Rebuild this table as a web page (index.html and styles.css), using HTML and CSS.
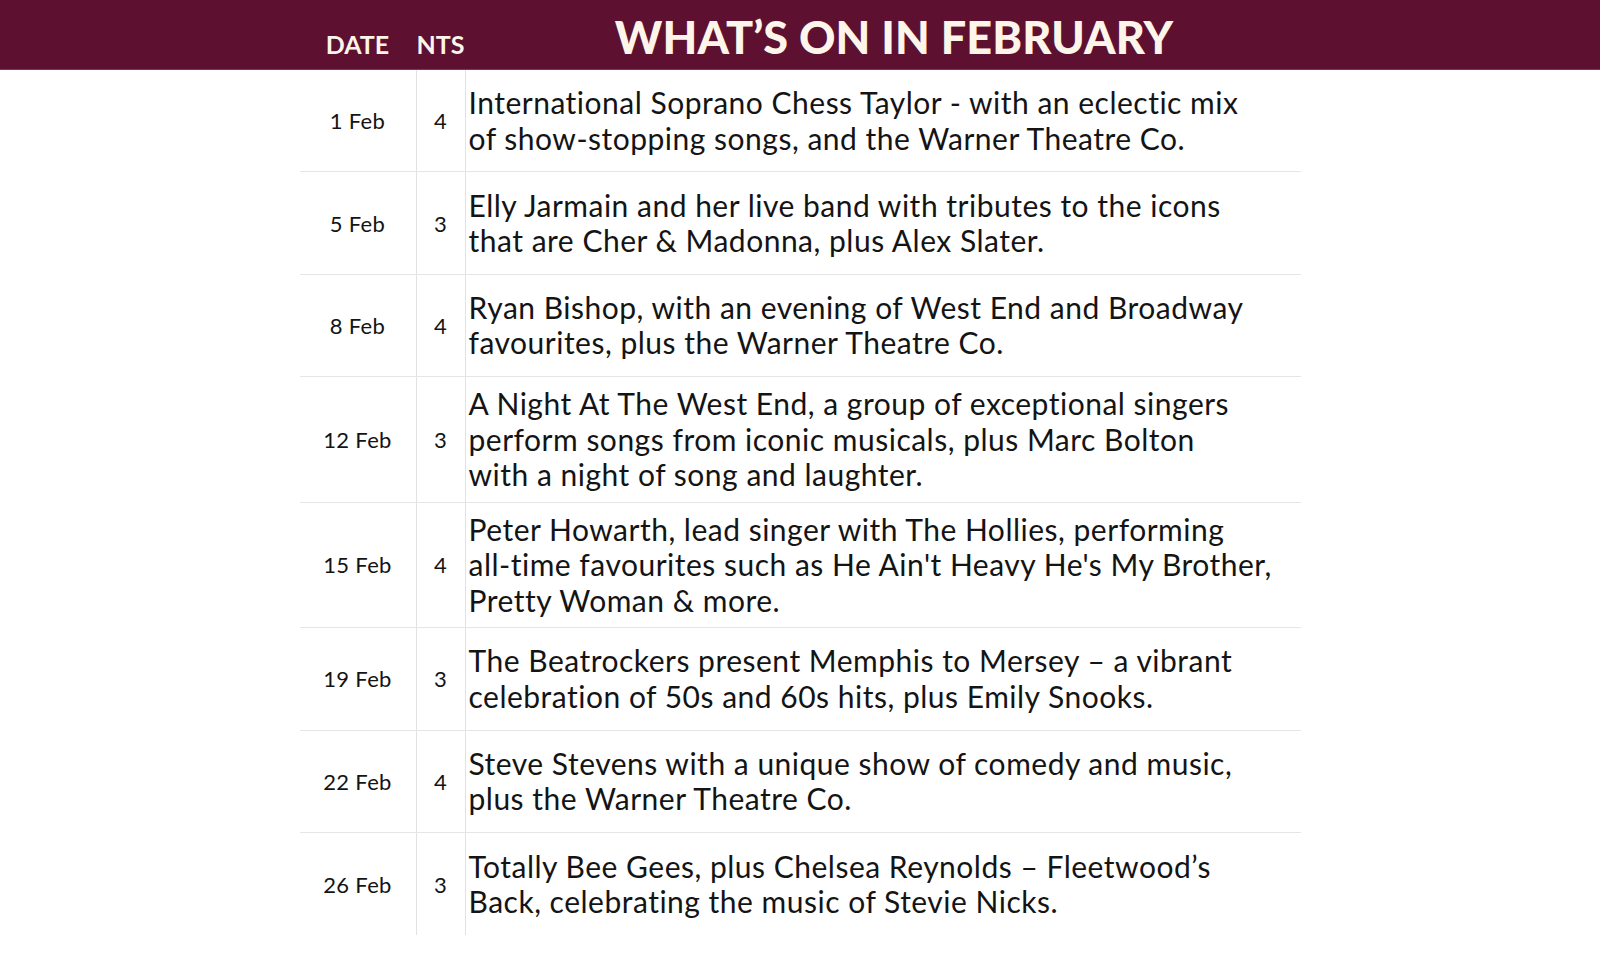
FILE: index.html
```html
<!DOCTYPE html>
<html lang="en">
<head>
<meta charset="utf-8">
<title>What's On in February</title>
<link rel="stylesheet" href="styles.css">
</head>
<body>
<header class="bar">
  <div class="grid head">
    <div class="hcell">DATE</div>
    <div class="hcell">NTS</div>
    <h1 class="title">WHAT’S ON IN FEBRUARY</h1>
  </div>
</header>
<main class="table">
  <div class="grid row">
    <div class="cell date">1 Feb</div>
    <div class="cell nts">4</div>
    <div class="cell desc">International Soprano Chess Taylor - with an eclectic mix<br>of show-stopping songs, and the Warner Theatre Co.</div>
  </div>
  <div class="grid row">
    <div class="cell date">5 Feb</div>
    <div class="cell nts">3</div>
    <div class="cell desc">Elly Jarmain and her live band with tributes to the icons<br>that are Cher &amp; Madonna, plus Alex Slater.</div>
  </div>
  <div class="grid row">
    <div class="cell date">8 Feb</div>
    <div class="cell nts">4</div>
    <div class="cell desc">Ryan Bishop, with an evening of West End and Broadway<br>favourites, plus the Warner Theatre Co.</div>
  </div>
  <div class="grid row">
    <div class="cell date">12 Feb</div>
    <div class="cell nts">3</div>
    <div class="cell desc">A Night At The West End, a group of exceptional singers<br>perform songs from iconic musicals, plus Marc Bolton<br>with a night of song and laughter.</div>
  </div>
  <div class="grid row">
    <div class="cell date">15 Feb</div>
    <div class="cell nts">4</div>
    <div class="cell desc">Peter Howarth, lead singer with The Hollies, performing<br>all-time favourites such as He Ain't Heavy He's My Brother,<br>Pretty Woman &amp; more.</div>
  </div>
  <div class="grid row">
    <div class="cell date">19 Feb</div>
    <div class="cell nts">3</div>
    <div class="cell desc">The Beatrockers present Memphis to Mersey – a vibrant<br>celebration of 50s and 60s hits, plus Emily Snooks.</div>
  </div>
  <div class="grid row">
    <div class="cell date">22 Feb</div>
    <div class="cell nts">4</div>
    <div class="cell desc">Steve Stevens with a unique show of comedy and music,<br>plus the Warner Theatre Co.</div>
  </div>
  <div class="grid row last">
    <div class="cell date">26 Feb</div>
    <div class="cell nts">3</div>
    <div class="cell desc">Totally Bee Gees, plus Chelsea Reynolds – Fleetwood’s<br>Back, celebrating the music of Stevie Nicks.</div>
  </div>
</main>
</body>
</html>
```
FILE: styles.css
```css
html, body {
  margin: 0;
  padding: 0;
  background: #ffffff;
}
body {
  font-family: "Lato", "Open Sans", sans-serif;
  color: #141414;
}
.grid {
  display: grid;
  grid-template-columns: 116px 50px 1fr;
  width: 1001px;
  margin: 0 auto;
}
.bar {
  background: #5d1030;
  height: 70px;
  border-bottom: 1px solid #7a3a55;
  box-sizing: border-box;
}
.head {
  height: 69px;
  align-items: end;
}
.hcell {
  color: #fdf4ea;
  font-weight: 700;
  font-size: 25px;
  text-align: center;
  padding-bottom: 12px;
  line-height: 1;
  white-space: nowrap;
}
.title {
  margin: 0;
  color: #fdf4ea;
  font-weight: 900;
  font-size: 45px;
  line-height: 1;
  letter-spacing: 0.1px;
  text-align: center;
  padding: 0 0 9px 22px;
}
.row {
  min-height: 102.4px;
  border-bottom: 1px solid #e6e6e6;
  box-sizing: border-box;
}
.row.last {
  border-bottom: none;
}
.cell {
  display: flex;
  align-items: center;
}
.date, .nts {
  justify-content: center;
  font-size: 22px;
  letter-spacing: 0.3px;
}
.nts {
  border-left: 1px solid #e2e2e2;
  border-right: 1px solid #e2e2e2;
}
.desc {
  font-size: 30px;
  letter-spacing: 0.5px;
  line-height: 35.5px;
  padding: 9px 0 9px 3px;
}
```
